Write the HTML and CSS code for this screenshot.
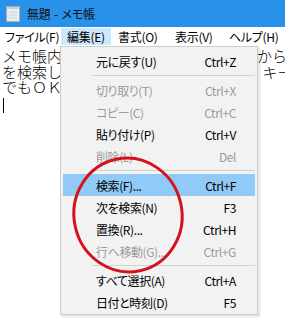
FILE: index.html
```html
<!DOCTYPE html>
<html lang="ja">
<head>
    <meta charset="UTF-8">
    <title>無題 - メモ帳</title>
    <link rel="stylesheet" href="styles.css">
</head>
<body>
    <div class="window">
        <header class="titlebar">
            <svg class="app-icon" width="14" height="16" viewBox="0 0 14 16">
                <rect x="0.5" y="0.5" width="13" height="15" fill="#e8eef2" stroke="#9fb0bc"/>
                <rect x="1" y="1" width="12" height="2" fill="#bcd0de"/>
                <line x1="3" y1="6" x2="11" y2="6" stroke="#c9d4dc"/>
                <line x1="3" y1="9" x2="11" y2="9" stroke="#c9d4dc"/>
                <line x1="3" y1="12" x2="11" y2="12" stroke="#c9d4dc"/>
            </svg>
            <span class="title">無題 - メモ帳</span>
        </header>
        <nav class="menubar">
            <span class="menu-item file">ファイル(F)</span>
            <span class="menu-item edit open">編集(E)</span>
            <span class="menu-item format">書式(O)</span>
            <span class="menu-item view">表示(V)</span>
            <span class="menu-item help">ヘルプ(H)</span>
        </nav>
        <div class="editor">
            <div class="line">メモ帳内の文字列は「編集」メニューから</div>
            <div class="line">を検索して探せます。検索する語句の&ensp;キーワード</div>
            <div class="line">でもＯＫです。</div>
            <div class="line"><span class="caret"></span></div>
        </div>

        <ul class="dropdown">
            <li><span>元に戻す(U)</span><span>Ctrl+Z</span></li>
            <li class="sep"></li>
            <li class="disabled"><span>切り取り(T)</span><span>Ctrl+X</span></li>
            <li class="disabled"><span>コピー(C)</span><span>Ctrl+C</span></li>
            <li><span>貼り付け(P)</span><span>Ctrl+V</span></li>
            <li class="disabled"><span>削除(L)</span><span>Del</span></li>
            <li class="sep"></li>
            <li class="active"><span>検索(F)...</span><span>Ctrl+F</span></li>
            <li><span>次を検索(N)</span><span>F3</span></li>
            <li><span>置換(R)...</span><span>Ctrl+H</span></li>
            <li class="disabled"><span>行へ移動(G)...</span><span>Ctrl+G</span></li>
            <li class="sep"></li>
            <li><span>すべて選択(A)</span><span>Ctrl+A</span></li>
            <li><span>日付と時刻(D)</span><span>F5</span></li>
        </ul>

        <svg class="marker" width="285" height="324" viewBox="0 0 285 324">
            <ellipse cx="128" cy="215" rx="54" ry="57" transform="rotate(-12 128 215)" fill="none" stroke="#d3121c" stroke-width="3"/>
        </svg>
    </div>
</body>
</html>
```

FILE: styles.css
```css
body {
    margin: 0;
    width: 285px;
    height: 324px;
    overflow: hidden;
    background: #fff;
    font-family: "Noto Sans CJK JP", "Noto Sans", sans-serif;
}
.window {
    position: relative;
    display: flex;
    flex-direction: column;
    height: 100%;
}
.titlebar {
    height: 27px;
    display: flex;
    align-items: center;
    gap: 7px;
    padding-left: 6px;
    background: #2892ea;
}
.title {
    font-size: 12px;
    color: #111;
    letter-spacing: -0.2px;
    word-spacing: 1px;
    font-feature-settings: "palt";
}
.menubar {
    height: 19px;
    display: flex;
    align-items: stretch;
    font-size: 12px;
    letter-spacing: -0.3px;
    font-feature-settings: "palt";
    white-space: nowrap;
}
.menu-item {
    display: flex;
    align-items: center;
    box-sizing: border-box;
    padding-left: 5px;
    line-height: 1;
}
.menu-item.file { width: 61px; }
.menu-item.edit { width: 50px; padding-left: 6px; }
.menu-item.format { width: 57px; padding-left: 7px; }
.menu-item.view { width: 54px; padding-left: 7px; }
.menu-item.help { width: 60px; padding-left: 7px; }
.menu-item.open {
    background: #cce8ff;
    margin-top: 1px;
    margin-bottom: 1px;
}
.editor {
    flex: 1;
    padding: 2px 0 0 2px;
    font-size: 15px;
    line-height: 15.5px;
    font-weight: 300;
    overflow: hidden;
}
.line {
    white-space: nowrap;
    height: 15.5px;
}
.caret {
    display: inline-block;
    width: 1px;
    height: 15px;
    margin-left: 1px;
    margin-top: 3px;
    background: #000;
    vertical-align: top;
}
.dropdown {
    position: absolute;
    left: 60px;
    top: 46px;
    width: 198px;
    box-sizing: border-box;
    margin: 0;
    padding: 3px 1px 1px;
    list-style: none;
    background: #f2f2f2;
    border: 1px solid #cccccc;
    box-shadow: 2px 2px 2px rgba(0, 0, 0, 0.12);
    font-size: 12px;
    letter-spacing: -0.4px;
    font-feature-settings: "palt";
    white-space: nowrap;
}
.dropdown li {
    display: flex;
    justify-content: space-between;
    align-items: center;
    height: 22px;
    margin: 0 1px;
    padding: 0 19px 0 33px;
    color: #000;
}
.dropdown li.disabled {
    color: #9b9b9b;
}
.dropdown li.active {
    background: #91c9f7;
}
.dropdown li.sep {
    height: 7px;
    padding: 0;
    margin: 0 1px 0 30px;
    position: relative;
}
.dropdown li.sep::after {
    content: '';
    position: absolute;
    left: 0;
    right: 0;
    top: 3px;
    height: 1px;
    background: #d3d3d3;
}
.marker {
    position: absolute;
    left: 0;
    top: 0;
    pointer-events: none;
}
```
